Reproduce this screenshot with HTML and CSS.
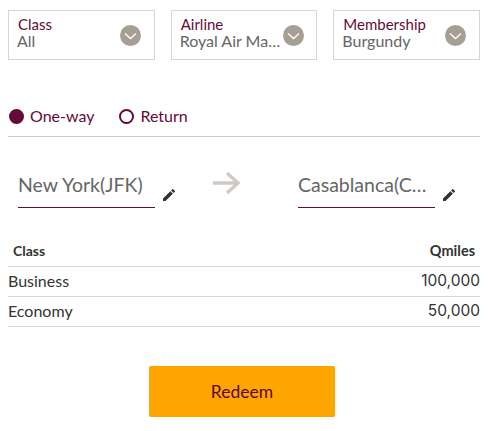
FILE: index.html
```html
<!DOCTYPE html>
<html lang="en">
<head>
<meta charset="utf-8">
<title>Redeem</title>
<link rel="stylesheet" href="styles.css">
</head>
<body>
<div class="filters">
  <div class="select">
    <div class="select-text"><span class="select-label">Class</span><span class="select-value">All</span></div>
    <svg class="chev" viewBox="0 0 21 21"><circle cx="10.5" cy="10.5" r="10.5" fill="#a89f94"/><path d="M5 8.5l5.5 5 5.5-5" fill="none" stroke="#fff" stroke-width="1.3"/></svg>
  </div>
  <div class="select">
    <div class="select-text"><span class="select-label">Airline</span><span class="select-value">Royal Air Maroc</span></div>
    <svg class="chev" viewBox="0 0 21 21"><circle cx="10.5" cy="10.5" r="10.5" fill="#a89f94"/><path d="M5 8.5l5.5 5 5.5-5" fill="none" stroke="#fff" stroke-width="1.3"/></svg>
  </div>
  <div class="select">
    <div class="select-text"><span class="select-label">Membership</span><span class="select-value">Burgundy</span></div>
    <svg class="chev" viewBox="0 0 21 21"><circle cx="10.5" cy="10.5" r="10.5" fill="#a89f94"/><path d="M5 8.5l5.5 5 5.5-5" fill="none" stroke="#fff" stroke-width="1.3"/></svg>
  </div>
</div>
<div class="trip">
  <span class="radio"><i class="dot dot-on"></i>One-way</span>
  <span class="radio"><i class="dot"></i>Return</span>
</div>
<div class="route">
  <div class="place"><span class="place-name">New York(JFK)</span></div>
  <svg class="edit" viewBox="0 0 24 24"><path d="M3 17.25V21h3.75L17.81 9.94l-3.75-3.75L3 17.25zM20.71 7.04a1 1 0 0 0 0-1.41l-2.34-2.34a1 1 0 0 0-1.41 0l-1.83 1.83 3.75 3.75 1.83-1.83z" fill="#333"/></svg>
  <svg class="arrow" viewBox="0 0 28 24"><path d="M1 12h25M15 2l11 10-11 10" fill="none" stroke="#cfcac5" stroke-width="3.4"/></svg>
  <div class="place"><span class="place-name">Casablanca(CMN)</span></div>
  <svg class="edit" viewBox="0 0 24 24"><path d="M3 17.25V21h3.75L17.81 9.94l-3.75-3.75L3 17.25zM20.71 7.04a1 1 0 0 0 0-1.41l-2.34-2.34a1 1 0 0 0-1.41 0l-1.83 1.83 3.75 3.75 1.83-1.83z" fill="#333"/></svg>
</div>
<div class="miles">
  <div class="row head"><span>Class</span><span>Qmiles</span></div>
  <div class="row"><span>Business</span><span class="num">100,000</span></div>
  <div class="row"><span>Economy</span><span class="num">50,000</span></div>
</div>
<div class="actions"><button class="redeem">Redeem</button></div>
</body>
</html>
```
FILE: styles.css
```css
* { box-sizing: border-box; }
html, body { height: 100%; }
body {
  margin: 0;
  padding: 10px 9px 0 8px;
  background: #fff;
  font-family: "Lato", "Open Sans", sans-serif;
  color: #333;
  overflow: hidden;
}
.filters { display: flex; gap: 16px; }
.select {
  flex: 1 1 0;
  min-width: 0;
  height: 50px;
  border: 1px solid #d6d6d6;
  padding: 7px 3px 0 8px;
  display: flex;
  align-items: flex-start;
}
.select-text { flex: 1; min-width: 0; display: flex; flex-direction: column; }
.select-label { font-size: 15px; line-height: 13px; color: #660a37; padding-left: 1px; }
.select-value {
  font-size: 16px;
  line-height: 20px;
  color: #666;
  white-space: nowrap;
  overflow: hidden;
  text-overflow: ellipsis;
}
.chev { flex: none; width: 21px; height: 21px; margin: 7px 10px 0 0; }
.select:nth-child(2) .chev { margin-right: 9px; }
.trip {
  margin-top: 46px;
  height: 31px;
  display: flex;
  align-items: flex-start;
  gap: 24px;
  border-bottom: 1px solid #ccc;
}
.radio { display: flex; align-items: center; gap: 6px; font-size: 16px; line-height: 20px; color: #660a37; }
.dot { width: 15px; height: 15px; border-radius: 50%; border: 2px solid #660a37; margin-left: 1px; }
.dot-on { background: #660a37; }
.route { margin-top: 27px; display: flex; align-items: flex-start; padding-left: 10px; }
.place {
  width: 137px;
  height: 44px;
  border-bottom: 1px solid #660a37;
  padding-top: 6px;
  overflow: hidden;
}
.place-name {
  display: block;
  font-size: 19.5px;
  line-height: 30px;
  color: #666;
  white-space: nowrap;
  overflow: hidden;
  text-overflow: ellipsis;
}
.edit { flex: none; width: 16px; height: 16px; margin: 23px 0 0 6px; }
.arrow { flex: none; width: 28px; height: 24px; margin: 7px 58px 0 35px; }
.miles { margin-top: 28px; }
.row {
  display: flex;
  justify-content: space-between;
  align-items: center;
  height: 30px;
  padding-bottom: 2px;
  border-bottom: 1px solid #d6d6d6;
  font-size: 16px;
  color: #333;
}
.head { height: 31px; font-size: 14px; font-weight: 700; padding: 0 5px 2px 5px; }
.head span:last-child { font-size: 14.5px; }
.num { font-family: "Inter", sans-serif; font-size: 15.5px; }
.actions { margin-top: 39px; display: flex; justify-content: center; padding-right: 4px; }
.redeem {
  width: 186px;
  height: 51px;
  border: 0;
  border-radius: 2px;
  background: #ffa500;
  color: #5c0630;
  font-family: inherit;
  font-size: 17.5px;
}
```
